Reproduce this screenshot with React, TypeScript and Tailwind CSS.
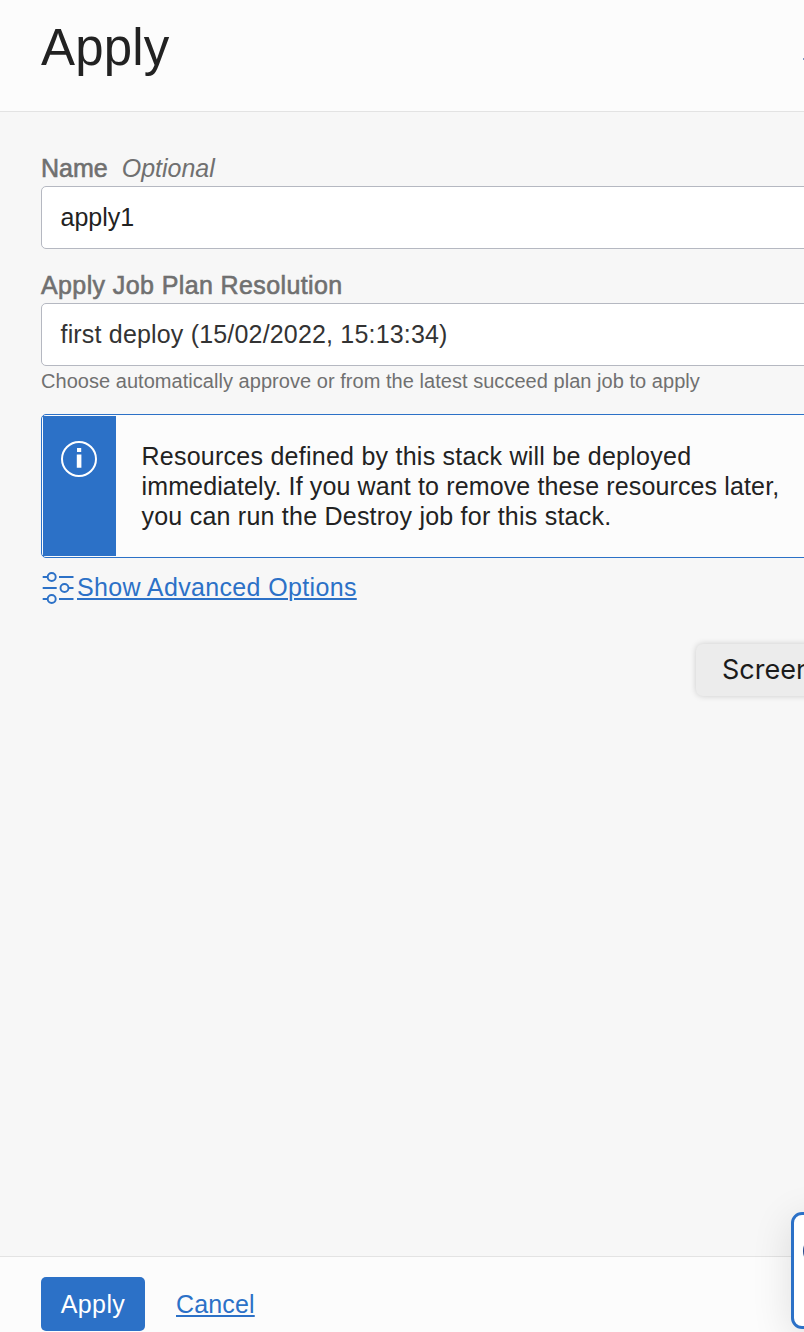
import type { ReactNode } from 'react';

function Field({ children }: { children: ReactNode }) {
  return (
    <div className="h-[63px] w-[820px] rounded-[5px] border border-[#b5b8c1] bg-white pl-[18.5px] leading-[61px]">
      {children}
    </div>
  );
}

function InfoIcon() {
  return (
    <svg className="h-[38px] w-[38px]" viewBox="0 0 38 38" fill="none">
      <circle cx="19" cy="19" r="17" stroke="#fff" strokeWidth="2" />
      <path d="M17 8h4.2v4H17zM16.8 14.5h4.6v13.3h-4.6z" fill="#fff" />
    </svg>
  );
}

function OptionsIcon() {
  return (
    <svg className="h-[34px] w-[34px] shrink-0" viewBox="0 0 34 34" fill="none" stroke="#2c71c7" strokeWidth="1.9">
      <path d="M.7 6h5M17 6h14.5M.7 17h14M27 17h4.5M.7 28h5M17 28h14.5" />
      <circle cx="9.7" cy="6" r="4" />
      <circle cx="22.5" cy="17" r="4" />
      <circle cx="9.7" cy="28" r="4" />
    </svg>
  );
}

export default function App() {
  return (
    <div className="relative flex h-[1332px] w-[804px] flex-col overflow-hidden whitespace-nowrap bg-[#f7f7f7] font-['Liberation_Sans',Arial,sans-serif] text-[25px] text-[#222]">
      <header className="h-[112px] shrink-0 border-b border-[#e3e3e3] bg-[#fcfcfc] pl-[41px]">
        <h1 className="pt-[18px] text-[51px] leading-[60px] tracking-[0.2px]">Apply</h1>
      </header>

      <main className="flex flex-1 flex-col pl-[41px]">
        <label className="mt-[42px] flex h-[32px] items-center gap-[14px] pb-[2px] text-[#707070]">
          <span className="[-webkit-text-stroke:0.6px_#707070]">Name</span>
          <span className="italic">Optional</span>
        </label>
        <Field>apply1</Field>
        <label className="mt-[22px] h-[32px] leading-[29px] tracking-[0.39px] text-[#707070] [-webkit-text-stroke:0.6px_#707070]">
          Apply Job Plan Resolution
        </label>
        <Field>
          <span className="tracking-[0.18px] text-[#333]">first deploy (15/02/2022, 15:13:34)</span>
        </Field>
        <p className="h-[48px] text-[20px] leading-[31px] tracking-[0.04px] text-[#707070]">
          Choose automatically approve or from the latest succeed plan job to apply
        </p>
        <section className="flex h-[144px] w-[820px] rounded-[5px] border border-[#2c71c7] bg-[#fcfcfc] p-px">
          <div className="flex w-[73px] bg-[#2c71c7] pl-[17px] pt-[24px]">
            <InfoIcon />
          </div>
          <div className="pl-[25.5px] pt-[25px] leading-[30px]">
            <p className="tracking-[0.25px]">Resources defined by this stack will be deployed</p>
            <p className="tracking-[0.13px]">immediately. If you want to remove these resources later,</p>
            <p className="tracking-[0.23px]">you can run the Destroy job for this stack.</p>
          </div>
        </section>
        <a className="mt-[13px] flex h-[34px] gap-[1px] pl-[1px] text-[#2c71c7]">
          <OptionsIcon />
          <span className="leading-[33px] tracking-[0.35px] underline decoration-2 underline-offset-[2px]">Show Advanced Options</span>
        </a>
      </main>

      <footer className="flex h-[76px] shrink-0 border-t border-[#e3e3e3] bg-[#fcfcfc] pl-[41px] pt-[20px]">
        <button className="h-[54px] w-[104px] rounded-[5px] bg-[#2c71c7] pt-px tracking-[0.4px] text-white">Apply</button>
        <a className="ml-[31px] h-[54px] leading-[54px] tracking-[0.15px] text-[#2c71c7] underline decoration-2 underline-offset-[2px]">Cancel</a>
      </footer>

      <div className="absolute left-[696px] top-[644px] h-[52px] w-[200px] rounded-[7px] bg-[#ececec] pl-[26px] font-[Inter,sans-serif] text-[27px] leading-[52px] text-[#1b1b1b] shadow-[0_0_6px_rgba(0,0,0,0.18)]">
        Screenshot
      </div>
      <div className="absolute left-[803px] top-[58px] h-[2px] w-[10px] bg-[#7d99c2]" />
      <div className="absolute left-[791px] top-[1212px] h-[117px] w-[117px] rounded-[11px] border-[3px] border-[#2c71c7] bg-white shadow-[0_8px_40px_rgba(0,20,20,0.12)]">
        <div className="ml-[9px] mt-[20px] h-[32px] w-[32px] rounded-full border-[3px] border-[#22468a]" />
      </div>
    </div>
  );
}
